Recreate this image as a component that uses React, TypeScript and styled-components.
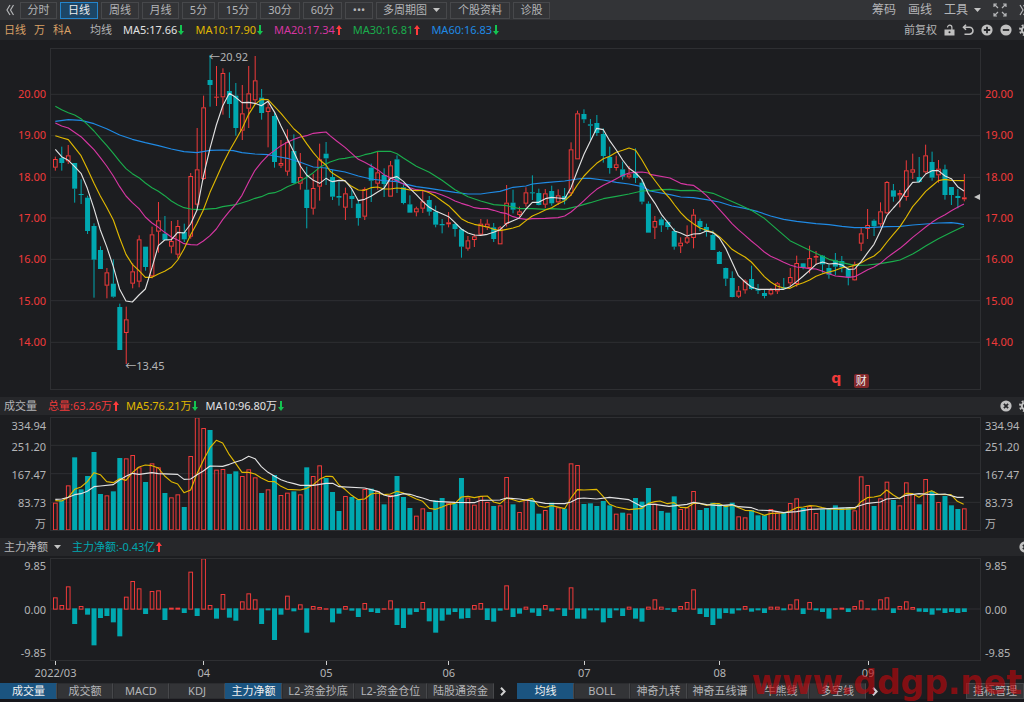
import React from "react";
import styled, { createGlobalStyle } from "styled-components";

const c = {
  page: "#1c1d20",
  bar: "#26272a",
  tool: "#333437",
  line: "#2e2f32",
  edge: "#47484b",
  text: "#b4b5b7",
  red: "#ef3a3a",
  teal: "#00a8b0",
  yellow: "#e0b800",
  white: "#e2e2e2",
  pink: "#d636a2",
  green: "#1aad4c",
  blue: "#1f8ae4",
  up: "#ff3b3b",
  down: "#14c451",
};

const Global = createGlobalStyle`
  * { box-sizing: border-box; }
  body { margin: 0; background: #17161b; }
  button { font: inherit; color: inherit; }
`;

const Page = styled.div`
  position: relative;
  overflow: hidden;
  padding-bottom: 3px;
  color: ${c.text};
  font: 11px/16px "Noto Sans", "Noto Sans CJK SC", sans-serif;
  white-space: nowrap;
`;
const Body = styled.main`
  background: ${c.page};
`;
const Toolbar = styled.header`
  display: flex;
  align-items: center;
  height: 20px;
  background: ${c.tool};
  overflow: hidden;
`;
const ToolButtons = styled.nav`
  display: flex;
  gap: 3px;
  flex: 1 0 auto;
`;
const ToolButton = styled.button<{ $w: number; $on?: boolean }>`
  display: flex;
  align-items: center;
  justify-content: center;
  gap: 6px;
  width: ${(p) => p.$w}px;
  height: 17px;
  padding: 0;
  line-height: 14px;
  border: 1px solid ${(p) => (p.$on ? "#2485cc" : c.edge)};
  background: ${(p) => (p.$on ? "#1d4666" : "transparent")};
  color: ${(p) => (p.$on ? "#eeeeee" : c.text)};
`;
const PlainButton = styled.button`
  display: inline-flex;
  flex: none;
  align-items: center;
  justify-content: center;
  gap: 6px;
  padding: 0;
  border: 0;
  background: none;
`;
const ToolLinks = styled.div`
  display: flex;
  align-items: center;
  gap: 12px;
  margin-right: -4px;
  font-size: 12px;
`;
const Strip = styled.div<{ $h: number }>`
  display: flex;
  align-items: center;
  height: ${(p) => p.$h}px;
  padding-left: 4px;
  background: ${c.bar};
  overflow: hidden;
`;
const Names = styled.div`
  display: flex;
  gap: 8px;
  color: #d9a066;
`;
const Values = styled.div<{ $gap: number; $start: number }>`
  display: flex;
  gap: ${(p) => p.$gap}px;
  padding-left: ${(p) => p.$start}px;
`;
const Value = styled.span<{ $color: string }>`
  display: inline-flex;
  align-items: center;
  gap: 1px;
  color: ${(p) => p.$color};
`;
const StripTools = styled.div`
  display: flex;
  align-items: center;
  gap: 7px;
  margin: 0 -7px 0 auto;
`;
const Panel = styled.section<{ $top: number; $bottom: number }>`
  display: grid;
  grid-template-columns: 50px minmax(0, 1fr) 43px;
  padding: ${(p) => p.$top}px 0 ${(p) => p.$bottom}px;
`;
const Frame = styled.div<{ $h: number }>`
  position: relative;
  height: ${(p) => p.$h}px;
  border: 1px solid ${c.line};
`;
const Plot = styled.svg`
  display: block;
  width: 100%;
  height: 100%;
`;
const Scale = styled.div<{ $side: "left" | "right"; $pad?: string; $color?: string }>`
  display: flex;
  flex-direction: column;
  justify-content: space-between;
  padding: ${(p) => p.$pad ?? "0"};
  text-align: ${(p) => (p.$side === "left" ? "right" : "left")};
  margin: ${(p) => (p.$side === "left" ? "0 4px 0 0" : "0 0 0 4px")};
  color: ${(p) => p.$color ?? c.text};
`;
const VolumeScale = styled(Scale)`
  display: grid;
  grid-template-rows: 14px 28px 28px 28px 14px;
  align-items: center;
  align-content: end;
  justify-content: stretch;
`;
const Mark = styled.span<{ $x: number; $y: number }>`
  position: absolute;
  left: ${(p) => p.$x}%;
  top: ${(p) => p.$y}px;
  display: flex;
  align-items: center;
`;
const Quote = styled(Mark)`
  color: ${c.red};
  font: bold 14px/16px "DejaVu Sans", sans-serif;
`;
const Report = styled(Mark)`
  justify-content: center;
  width: 15px;
  height: 14px;
  border-radius: 2px;
  background: #82282b;
  color: #eeeeee;
`;
const Pointer = styled.svg`
  position: absolute;
  right: 0;
  top: 145px;
`;
const Dates = styled.div`
  display: flex;
  height: 22px;
  padding: 0 43px 0 55px;
`;
const Month = styled.div<{ $days: number }>`
  flex: ${(p) => p.$days} 1 0;
`;
const MonthLabel = styled.div`
  display: flex;
  flex-direction: column;
  align-items: center;
  width: 1px;
  &::before {
    content: "";
    width: 1px;
    height: 4px;
    background: #cfcfcf;
  }
`;
const Tabs = styled.footer`
  display: flex;
  align-items: center;
  height: 16px;
  background: ${c.page};
`;
const TabGroup = styled.div`
  display: flex;
`;
const Tab = styled.button<{ $w: number; $on?: boolean }>`
  width: ${(p) => p.$w}px;
  height: 16px;
  padding: 0;
  line-height: 14px;
  border: 1px solid ${(p) => (p.$on ? "#1b5480" : "#2b2c2f")};
  border-right-color: ${c.edge};
  background: ${(p) => (p.$on ? "#1b5480" : c.tool)};
  color: ${(p) => (p.$on ? "#f0f0f0" : c.text)};
`;
const More = styled(PlainButton)<{ $w: number }>`
  width: ${(p) => p.$w}px;
`;
const NextButton = styled(More)`
  justify-content: flex-start;
  padding-left: 6px;
`;
const Manage = styled(Tab)`
  margin-left: auto;
  border-color: ${c.edge};
`;
const Watermark = styled.div`
  position: absolute;
  right: 2px;
  bottom: 2px;
  color: rgba(190, 8, 12, 0.64);
  font: bold 33px/34px "DejaVu Sans", sans-serif;
  pointer-events: none;
`;

/* ---------- data: plot units, three to a pixel ---------- */

type Candle = { up: boolean; high: number; top: number; bottom: number; low: number };

const candles = (base: number, text: string): Candle[] =>
  text.trim().split(/\s+/).map((item) => {
    const [high, top, bottom, low] = item.slice(1).split(",").map((n) => Number(n) + base);
    return { up: item[0] === "r", high, top, bottom, low };
  });

const line = (dx: number, dy: number, text: string) =>
  text.trim().split(/\s+/).map((item) => {
    const [x, y] = item.split(",").map(Number);
    return `${x + dx},${y + dy}`;
  }).join(" ");

const priceLine = (a: string, b: string, d: string) =>
  [line(-153, -27, a), line(837, 123, b), line(1797, 243, d)].join(" ");
const volumeLine = (a: string, b: string, d: string) =>
  [line(-153, -69, a), line(837, -69, b), line(1827, -69, d)].join(" ");

const series: Candle[] = [
  ...candles(-27, `
    r350,357,383,392 g320,354,369,392 r315,346,364,372 g369,369,446,488 g418,462,464,492 g467,473,573,582
    g550,558,659,773 g619,630,687,687 r684,697,737,775 g658,731,770,773 g791,801,930,930 r800,838,879,972
    r670,694,731,745 r586,598,725,742 g620,620,681,692 r560,583,709,715 r486,541,575,638 g528,581,600,600
    r543,603,620,640 r540,558,644,655 g551,576,598,606 r399,408,590,596 r264,388,494,500 r167,202,417,420
    g45,120,135,200 r78,170,172,198 r85,99,172,224 g97,153,192,234 g129,167,264,287 r135,220,272,300
    r78,160,206,264 r48,121,181,194 g147,173,219,239 r190,202,216,322 g217,228,366,383 r300,369,377,384
    r268,306,395,407 g283,333,429,431 r339,411,431,449 g380,449,504,565 r402,444,506,524 r311,358,440,482
    g306,341,355,435`),
  ...candles(123, `
    g240,261,320,330 g275,318,323,347 r293,310,353,390 g298,318,327,354 g332,341,384,407 r292,297,380,390
    g221,233,272,336 r184,247,281,299 g235,255,282,321 r213,226,320,320 g196,208,276,309 g284,292,339,343
    g316,343,368,368 r350,355,367,379 r300,334,356,369 g318,330,365,377 g347,365,404,412 g387,402,406,430
    r366,397,403,412 g398,402,417,440 g415,418,470,503 r438,451,476,482 r432,439,450,471 r387,401,434,436
    r388,401,412,420 g399,412,447,456 r408,412,463,463 r285,338,402,410 g299,338,359,370 r350,364,375,380
    r292,307,341,350 g256,307,309,330 g296,309,345,346 r297,310,344,354 g287,303,340,347 r298,316,337,345
    g294,318,331,343 r157,178,310,318 r62,70,208,208 g58,72,88,99 g87,103,107,150 g75,99,129,138
    g115,132,198,218 g170,201,234,251 r197,223,234,242 g215,238,260,269 r228,253,262,266 g175,250,264,279
    g267,278,335,343 g334,341,428,428`),
  ...candles(243, `
    r258,273,293,327 g262,268,286,306 g272,276,291,299 g295,303,350,359 r322,338,349,369 r286,322,338,342
    r237,254,324,355 g266,273,291,304 g281,291,305,320 g301,315,360,360 g363,366,402,402 g413,414,446,468
    g424,444,501,502 r468,482,500,504 r448,452,481,491 g407,447,477,480 g462,477,482,492 g480,489,498,505
    r474,479,493,496 r456,460,484,492 g444,471,476,478 r414,441,460,468 r377,399,462,470 g399,400,414,418
    r347,384,414,430 r363,378,383,405 g375,377,403,428 g404,414,434,446 g369,391,410,436 g378,393,412,427
    g413,417,442,466 r395,402,451,452 r293,310,341,363 r237,285,297,327 g268,272,289,318 r217,244,283,292
    r153,156,250,252 g162,181,200,215 r180,189,196,232 r91,121,201,212 r71,118,128,147 g81,141,156,158
    r44,76,127,131 g65,96,143,152 r90,116,136,158 g104,118,195,209 g171,171,195,225 g177,198,204,235
    r132,202,208,214`),
];

const priceLines = [
  {
    color: c.blue,
    points: priceLine(
      `166,244 205,239 243,241 282,251 320,266 359,285 397,298 436,308 475,317 514,327 552,335 591,338 630,331 668,330 700,332 726,338 765,342 804,344 824,348 862,355 901,367 940,381 978,384`,
      `0,238 45,246 85,258 123,267 162,272 201,275 220,281 259,290 298,295 336,301 375,307 414,312 452,312 472,309 510,304 530,298 549,292 588,288 607,282 646,278 704,273 742,267 762,265 781,265 820,270 859,277 897,282 936,290 955,299`,
      `0,183 60,194 92,201 130,203 169,209 208,216 246,228 285,235 324,245 362,258 401,268 440,274 498,281 537,284 576,289 614,293 672,292 711,290 750,289 788,285 827,282 865,279 904,278 923,280 942,284`),
  },
  {
    color: c.green,
    points: priceLine(
      `166,199 185,209 205,218 224,225 243,236 262,253 282,273 301,295 320,316 340,340 359,364 378,386 397,401 417,413 436,429 456,443 475,454 494,467 514,483 533,494 552,503 572,507 591,509 610,508 649,505 668,500 707,494 746,482 765,475 784,470 804,461 824,458 843,451 862,440 882,432 901,423 920,412 940,398 959,382 978,372`,
      `0,216 27,207 45,205 65,201 85,200 104,194 123,190 143,184 181,184 201,191 220,204 259,229 298,247 336,271 375,299 414,320 452,333 491,344 530,347 568,356 607,356 646,358 665,356 704,358 742,349 781,338 820,326 859,319 897,312 936,303`,
      `0,182 34,179 60,178 92,182 130,181 169,186 189,190 227,206 265,223 304,241 343,265 381,298 420,332 460,352 498,370 537,388 576,398 614,406 653,405 691,401 730,394 750,390 788,372 807,361 827,348 865,326 904,307 942,289`),
  },
  {
    color: c.pink,
    points: priceLine(
      `166,249 185,258 205,264 243,290 262,309 282,329 301,353 320,378 340,408 359,440 378,468 397,488 417,506 436,531 456,549 475,562 494,577 514,591 533,600 552,611 572,614 591,615 610,603 630,587 649,567 668,539 688,514 707,493 726,466 746,426 765,391 784,367 804,346 824,331 843,317 862,307 882,298 901,291 920,287 940,280 959,278 978,276`,
      `0,137 20,153 45,172 65,190 85,208 104,217 123,227 143,239 162,254 181,263 201,272 220,282 240,293 259,299 278,302 298,305 317,308 336,315 356,323 375,333 394,340 414,346 433,353 452,356 472,356 491,361 510,367 530,371 549,380 568,385 588,388 607,386 646,385 684,383 704,378 723,366 742,350 762,332 781,314 800,298 820,286 839,277 859,266 878,256 897,249 917,247 936,246 955,249`,
      `0,133 60,144 92,160 111,164 130,166 150,180 169,196 189,217 208,238 227,259 246,281 265,299 285,316 304,333 324,349 343,366 362,379 381,387 401,397 420,405 440,411 460,413 479,416 498,417 518,424 537,431 556,438 576,440 595,442 614,440 634,430 653,419 672,411 691,400 711,383 730,369 750,355 769,339 788,322 807,307 827,291 846,277 865,265 885,254 904,242 923,232 942,222`),
  },
  {
    color: c.yellow,
    points: priceLine(
      `166,287 185,293 205,299 243,347 262,386 282,430 301,468 320,502 340,540 359,594 378,643 397,673 417,692 436,712 456,712 475,702 494,694 514,682 533,660 552,627 572,584 591,550 610,510 630,457 649,415 668,372 688,333 707,300 726,266 746,223 765,193 784,178 804,179 824,200 843,220 862,243 882,267 901,283 920,311 940,338 959,360 978,375`,
      `0,243 8,250 27,262 45,274 65,289 85,300 104,301 123,293 143,291 162,297 181,297 201,294 220,296 240,300 259,302 278,301 298,308 317,319 336,333 356,347 375,366 394,386 414,397 433,403 452,407 472,411 491,418 510,422 530,418 549,414 568,408 588,392 607,378 626,370 646,360 665,353 684,342 704,332 723,315 742,285 762,258 781,238 800,220 820,206 839,199 859,187 878,181 897,174 917,181 936,210 955,243`,
      `0,132 34,177 60,206 74,225 92,248 111,267 130,281 150,294 169,301 189,307 208,320 227,338 246,358 265,370 285,381 304,396 324,418 343,440 362,456 381,468 401,474 420,475 440,465 460,458 479,450 498,439 518,431 537,426 556,421 576,413 595,411 614,406 634,398 653,387 672,378 691,362 711,336 730,313 750,290 769,261 788,230 807,208 827,184 846,168 865,152 885,148 904,151 942,152`),
  },
  {
    color: c.white,
    points: priceLine(
      `166,328 185,350 205,361 224,380 243,400 262,445 282,506 301,570 320,620 340,680 359,748 378,783 397,786 417,765 436,747 456,683 475,617 494,600 514,599 533,577 552,579 572,552 591,510 610,410 630,325 649,255 668,198 688,160 707,172 726,188 746,187 765,190 784,197 804,184 824,217 843,258 862,296 882,337 901,378 920,405 940,421 959,430 978,415 990,422`,
      `8,275 27,271 45,272 65,296 85,332 104,328 123,319 143,306 162,295 181,265 201,260 220,274 240,296 259,314 278,334 298,352 317,363 336,371 356,380 375,398 394,417 414,429 433,435 452,436 472,433 491,427 510,419 530,400 549,392 568,384 588,357 607,337 626,337 646,326 665,322 684,324 704,326 723,293 742,243 762,193 781,154 800,115 820,119 839,152 859,180 878,210 897,235 917,249 936,269 955,311 975,340 994,373 1017,402`,
      `74,303 92,309 111,318 130,312 150,311 169,303 189,308 208,324 227,355 246,396 265,437 285,456 304,471 324,478 363,478 401,478 420,470 440,455 460,438 479,421 498,403 518,396 537,402 556,400 576,405 595,418 614,417 634,394 653,368 672,343 691,304 711,256 730,234 750,212 769,181 788,157 807,156 827,132 846,122 865,122 885,138 904,146 923,170 942,183`),
  },
];

const volumes = `323 316 271 187 283 243 171 297 301 289 189 190 180 217 261 205 217 294 307 298 336 183 67 99 105
  224 222 237 229 243 223 247 294 283 240 300 293 289 298 217 243 211 249 291 348 303 306 314 282 281 288 328 300 243
  306 339 362 340 351 316 309 323 325 249 308 329 303 321 333 331 246 328 351 315 315 356 345 323 337 341 205 210 327
  325 333 318 331 356 353 356 309 320 279 326 348 353 304 342 337 288 345 339 323 327 330 323 364 367 345 361 361 342
  352 354 324 310 339 333 354 343 342 331 338 338 346 244 270 333 310 260 315 331 262 297 328 252 288 321 303 331 342 340`
  .split(/\s+/).map((v) => Number(v) - 69);

const volumeLines = [
  {
    color: c.yellow,
    points: volumeLine(
      `166,317 185,318 205,307 224,283 243,276 262,260 282,233 301,239 320,260 340,263 359,251 378,256 397,233 417,216 436,210 456,212 475,219 494,243 514,260 533,267 552,293 572,285 591,236 610,196 630,158 649,136 668,144 688,179 707,205 726,232 746,232 765,237 784,249 804,259 824,260 843,274 862,283 901,285 920,280 940,269 959,253 978,244`,
      `0,244 8,245 27,270 45,283 65,301 85,314 104,312 123,297 143,294 162,299 181,297 201,289 220,294 240,303 259,312 278,319 298,340 317,343 336,336 356,328 375,325 394,306 414,304 433,308 452,304 472,303 491,321 510,326 530,309 549,314 568,320 607,310 626,333 646,337 665,332 704,341 723,309 742,284 762,285 800,283 820,305 839,328 859,336 897,344 936,340 955,325 975,320`,
      `0,318 22,326 42,323 61,337 81,338 101,325 120,325 140,331 160,326 178,326 197,335 217,330 236,338 255,346 275,347 294,353 313,361 333,355 371,354 390,348 410,338 430,336 450,332 468,333 487,338 507,342 545,343 585,341 603,320 622,308 642,306 661,302 680,285 700,300 719,311 738,295 758,296 777,307 797,294 815,287 835,298 873,299 892,319 911,328`),
  },
  {
    color: c.white,
    points: volumeLine(
      `166,313 185,312 205,307 224,299 243,296 262,289 282,275 301,273 340,269 359,255 378,244 397,235 417,238 456,233 475,236 533,238 552,253 572,252 591,239 610,228 630,213 668,214 688,208 707,201 726,195 746,184 765,191 784,215 804,232 824,244 843,254 862,261 882,266 901,271 940,271 978,265`,
      `8,265 27,275 104,279 123,284 143,289 162,300 181,305 201,301 220,296 240,298 259,304 278,309 298,316 317,319 375,322 433,323 452,316 510,315 530,309 568,312 607,318 646,325 704,326 723,321 742,311 762,309 800,312 839,307 897,314 917,325 936,335 955,328 975,328`,
      `27,334 81,328 101,322 140,329 178,332 217,329 236,335 275,338 294,345 333,347 371,353 410,350 450,343 507,341 585,337 622,325 661,321 680,312 719,309 738,301 777,296 815,299 855,297 892,307 911,307`),
  },
];

const flows = `172 195 139 252 198 224 316 234 228 247 289 170 123 145 222 153 151 240 203 203 219 95 228 55 195 236
  162 233 242 184 160 178 252 211 300 224 167 214 193 278 198 201 206 247 221 198 212 231 189 216 219 206 181 255 264
  224 216 186 244 278 242 224 216 236 234 195 189 240 245 212 136 231 221 200 218 228 195 214 206 228 142 236 236 211
  211 247 234 211 228 200 236 245 200 178 200 209 216 198 186 148 222 231 255 236 219 221 211 198 215 211 219 200 200
  211 193 178 222 186 211 216 236 206 203 216 198 181 206 211 178 172 219 198 184 201 215 216 224 211 219 216 219 216`
  .split(/\s+/).map((v) => Number(v) - 57);

const WIDTH = 2787;
const centre = (i: number) => 13 + i * 19.34;

/* ---------- drawings ---------- */

function Bar({ i, top, bottom, up }: { i: number; top: number; bottom: number; up: boolean }) {
  const x = centre(i);
  const h = Math.max(bottom - top, 3);
  if (!up) return <rect x={x - 7.5} y={top} width={15} height={h} fill={c.teal} />;
  if (h < 6) return <rect x={x - 7} y={top} width={14} height={h} fill={c.red} />;
  return <rect x={x - 5.5} y={top + 1.5} width={11} height={h - 3} fill="none" stroke={c.red} strokeWidth={3} />;
}

function Grid({ rows }: { rows: number[] }) {
  return (
    <g stroke={c.line} strokeWidth={3}>
      {rows.map((y) => <line key={y} x1={0} x2={WIDTH} y1={y} y2={y} />)}
    </g>
  );
}

function Lines({ items }: { items: { color: string; points: string }[] }) {
  return (
    <g fill="none" strokeWidth={3.4} strokeLinejoin="round">
      {items.map((l) => <polyline key={l.color} points={l.points} stroke={l.color} />)}
    </g>
  );
}

function PricePlot() {
  return (
    <Plot viewBox={`0 0 ${WIDTH} 1020`} preserveAspectRatio="none">
      <Grid rows={[136, 260, 385, 507, 631, 755, 880]} />
      {series.map((k, i) => (
        <g key={i}>
          <g stroke={k.up ? c.red : c.teal} strokeWidth={3}>
            <line x1={centre(i)} x2={centre(i)} y1={k.high} y2={k.top} />
            <line x1={centre(i)} x2={centre(i)} y1={k.bottom} y2={k.low} />
          </g>
          <Bar i={i} top={k.top} bottom={k.bottom} up={k.up} />
        </g>
      ))}
      <Lines items={priceLines} />
    </Plot>
  );
}

function VolumePlot() {
  return (
    <Plot viewBox={`0 0 ${WIDTH} 336`} preserveAspectRatio="none">
      <Grid rows={[82, 167, 253]} />
      {volumes.map((v, i) => <Bar key={i} i={i} top={v} bottom={337} up={series[i].up} />)}
      <Lines items={volumeLines} />
    </Plot>
  );
}

function FlowPlot() {
  return (
    <Plot viewBox={`0 0 ${WIDTH} 303`} preserveAspectRatio="none">
      <Grid rows={[150]} />
      {flows.map((v, i) => (
        <Bar key={i} i={i} top={Math.min(v, 148)} bottom={Math.max(v, 152)} up={v < 150} />
      ))}
    </Plot>
  );
}

const Trend = ({ up }: { up?: boolean }) => (
  <svg width="6" height="12" viewBox="0 0 6 12">
    <path
      d={up ? "M3 1 L6 5 H4 V11 H2 V5 H0 Z" : "M3 11 L6 7 H4 V1 H2 V7 H0 Z"}
      fill={up ? c.up : c.down}
    />
  </svg>
);
const Caret = () => (
  <svg width="7" height="4" viewBox="0 0 7 4"><path d="M0 0h7L3.5 4z" fill="#c4c4c4" /></svg>
);
const Chevrons = ({ left }: { left?: boolean }) => (
  <svg width="9" height="12" viewBox="0 0 9 12" fill="none" stroke="#b4b5b7" strokeWidth="1.2">
    <path d={left ? "M4 1 1 6l3 5M7.500 1l-3 5 3 5" : "M1 1l3 5-3 5M4.500 1l3 5-3 5"} />
  </svg>
);
const Next = () => (
  <svg width="6" height="9" viewBox="0 0 6 9" fill="none" stroke="#d0d0d0" strokeWidth="2">
    <path d="M1 .8 4.600 4.500 1 8.200" />
  </svg>
);
const Expand = () => (
  <svg width="14" height="14" viewBox="0 0 14 14" fill="none" stroke="#b4b5b7" strokeWidth="1.2">
    <path d="M1 4V1h3M1 1l4 4M10 1h3v3M13 1 9 5M1 10v3h3M1 13l4-4M13 10v3h-3M13 13 9 9" />
  </svg>
);
const Lock = () => (
  <svg width="11" height="12" viewBox="0 0 11 12">
    <path d="M3.500 3.400a2.200 2.200 0 0 1 4.400 0V6" fill="none" stroke="#c0c0c0" strokeWidth="1.2" />
    <path d="M.5 5.500h10V11.500H.5z" fill="#c0c0c0" />
    <circle cx="5.500" cy="8.300" r="1" fill={c.bar} />
  </svg>
);
const Undo = () => (
  <svg width="12" height="12" viewBox="0 0 12 12" fill="none" stroke="#c0c0c0" strokeWidth="1.600">
    <path d="M4 .8 1.500 3.300 4 5.800M1.800 3.300H7.500a3.400 3.400 0 0 1 0 6.900H2.500" />
  </svg>
);
const Round = ({ sign }: { sign: string }) => (
  <svg width="12" height="12" viewBox="0 0 12 12">
    <circle cx="6" cy="6" r="5.600" fill="#c0c0c0" />
    <path d={sign} stroke={c.bar} strokeWidth="1.800" />
  </svg>
);
const PLUS = "M6 2.800v6.400M2.800 6h6.400";
const MINUS = "M2.800 6h6.400";
const CROSS = "M3.900 3.900l4.200 4.200M8.100 3.900 3.900 8.100";
const Gear = () => (
  <svg width="12" height="12" viewBox="0 0 12 12" fill="none" stroke="#c0c0c0">
    <circle cx="6" cy="6" r="3.200" strokeWidth="2" />
    <circle cx="6" cy="6" r="5" strokeWidth="2" strokeDasharray="1.960 1.960" />
  </svg>
);

/* ---------- page ---------- */

const periods: [string, number][] = [
  ["分时", 37], ["日线", 38], ["周线", 38], ["月线", 37], ["5分", 33], ["15分", 39], ["30分", 40], ["60分", 39],
  ["•••", 28], ["多周期图", 71], ["个股资料", 60], ["诊股", 37],
];
const averages: [string, string, boolean][] = [
  ["MA5:17.66", c.white, false], ["MA10:17.90", c.yellow, false], ["MA20:17.34", c.pink, true],
  ["MA30:16.81", c.green, true], ["MA60:16.83", c.blue, false],
];
const prices = ["20.00", "19.00", "18.00", "17.00", "16.00", "15.00", "14.00"];
const amounts = ["334.94", "251.20", "167.47", "83.73", "万"];
const nets = ["9.85", "0.00", "-9.85"];
const months: [string, number][] = [
  ["2022/03", 230], ["04", 190], ["05", 190], ["06", 210], ["07", 210], ["08", 230], ["09", 176],
];
const indicators: [string, number][] = [
  ["成交量", 57], ["成交额", 56], ["MACD", 56], ["KDJ", 56], ["主力净额", 57], ["L2-资金抄底", 72],
  ["L2-资金仓位", 73], ["陆股通资金", 67],
];
const overlays: [string, number][] = [
  ["均线", 57], ["BOLL", 56], ["神奇九转", 57], ["神奇五线谱", 66], ["牛熊线", 56], ["多空线", 57],
];

const cells = (items: string[]) => items.map((t) => <span key={t}>{t}</span>);

export default function App() {
  return (
    <Page>
      <Global />
      <Body>
        <Toolbar>
          <More $w={20} aria-label="收起"><Chevrons left /></More>
          <ToolButtons>
            {periods.map(([name, w]) => (
              <ToolButton key={name} $w={w} $on={name === "日线"}>
                {name}
                {name === "多周期图" && <Caret />}
              </ToolButton>
            ))}
          </ToolButtons>
          <ToolLinks>
            <PlainButton>筹码</PlainButton>
            <PlainButton>画线</PlainButton>
            <PlainButton>工具<Caret /></PlainButton>
            <PlainButton aria-label="全屏"><Expand /></PlainButton>
            <PlainButton aria-label="展开"><Chevrons /></PlainButton>
          </ToolLinks>
        </Toolbar>

        <Strip $h={20}>
          <Names><span>日线</span><span>万</span><span>科A</span></Names>
          <Values $gap={11} $start={19}>
            <span>均线</span>
            {averages.map(([label, color, up]) => (
              <Value key={label} $color={color}>{label}<Trend up={up} /></Value>
            ))}
          </Values>
          <StripTools>
            <PlainButton>前复权</PlainButton>
            <PlainButton aria-label="锁定"><Lock /></PlainButton>
            <PlainButton aria-label="撤销"><Undo /></PlainButton>
            <PlainButton aria-label="放大"><Round sign={PLUS} /></PlainButton>
            <PlainButton aria-label="缩小"><Round sign={MINUS} /></PlainButton>
            <PlainButton aria-label="设置"><Gear /></PlainButton>
          </StripTools>
        </Strip>

        <Panel $top={8} $bottom={7}>
          <Scale $side="left" $pad="38px 0 40px" $color={c.red}>{cells(prices)}</Scale>
          <Frame $h={342}>
            <PricePlot />
            <Mark $x={17} $y={0}>←20.92</Mark>
            <Mark $x={8} $y={309}>←13.45</Mark>
            <Quote $x={84} $y={321}>q</Quote>
            <Report $x={86.4} $y={325}>财</Report>
            <Pointer width="6" height="6" viewBox="0 0 6 6"><path d="M0 3 6 0v6z" fill="#c4c4c4" /></Pointer>
          </Frame>
          <Scale $side="right" $pad="38px 0 40px" $color={c.red}>{cells(prices)}</Scale>
        </Panel>

        <Strip $h={18}>
          <span>成交量</span>
          <Values $gap={7} $start={11}>
            <Value $color={c.red}>总量:63.26万<Trend up /></Value>
            <Value $color={c.yellow}>MA5:76.21万<Trend /></Value>
            <Value $color={c.white}>MA10:96.80万<Trend /></Value>
          </Values>
          <StripTools>
            <PlainButton aria-label="关闭成交量"><Round sign={CROSS} /></PlainButton>
            <PlainButton aria-label="成交量设置"><Gear /></PlainButton>
          </StripTools>
        </Strip>
        <Panel $top={2} $bottom={7}>
          <VolumeScale $side="left">{cells(amounts)}</VolumeScale>
          <Frame $h={114}><VolumePlot /></Frame>
          <VolumeScale $side="right">{cells(amounts)}</VolumeScale>
        </Panel>

        <Strip $h={18}>
          <PlainButton>主力净额<Caret /></PlainButton>
          <Values $gap={7} $start={11}>
            <Value $color={c.teal}>主力净额:-0.43亿<Trend up /></Value>
          </Values>
          <StripTools>
            <PlainButton aria-label="关闭主力净额"><Round sign={CROSS} /></PlainButton>
          </StripTools>
        </Strip>
        <Panel $top={2} $bottom={0}>
          <Scale $side="left">{cells(nets)}</Scale>
          <Frame $h={103}><FlowPlot /></Frame>
          <Scale $side="right">{cells(nets)}</Scale>
        </Panel>
        <Dates>
          {months.map(([name, days]) => (
            <Month key={name} $days={days}><MonthLabel>{name}</MonthLabel></Month>
          ))}
        </Dates>

        <Tabs>
          <TabGroup>
            {indicators.map(([name, w]) => (
              <Tab key={name} $w={w} $on={name === "成交量" || name === "主力净额"}>{name}</Tab>
            ))}
          </TabGroup>
          <NextButton $w={23} aria-label="更多指标"><Next /></NextButton>
          <TabGroup>
            {overlays.map(([name, w]) => <Tab key={name} $w={w} $on={name === "均线"}>{name}</Tab>)}
          </TabGroup>
          <NextButton $w={18} aria-label="更多叠加"><Next /></NextButton>
          <Manage $w={58}>指标管理</Manage>
        </Tabs>
      </Body>
      <Watermark>www.ddgp.net</Watermark>
    </Page>
  );
}
